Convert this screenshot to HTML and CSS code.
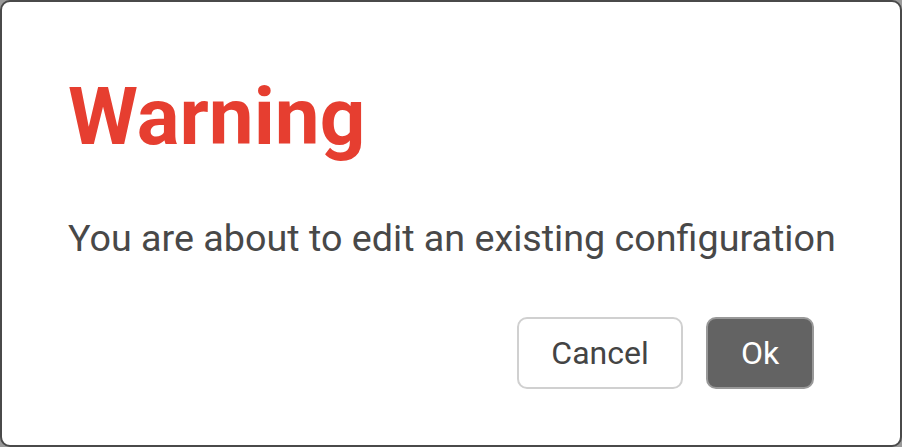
FILE: index.html
```html
<!DOCTYPE html>
<html>
<head>
<meta charset="utf-8">
<link rel="stylesheet" href="styles.css">
</head>
<body>
<div class="dialog">
  <h1 class="title">Warning</h1>
  <p class="message">You are about to edit an existing configuration</p>
  <div class="actions">
    <button class="btn btn-cancel">Cancel</button>
    <button class="btn btn-ok">Ok</button>
  </div>
</div>
</body>
</html>
```
FILE: styles.css
```css
html, body {
  margin: 0;
  padding: 0;
  width: 902px;
  height: 447px;
  background: #9a9a9a;
  overflow: hidden;
}
.dialog {
  box-sizing: border-box;
  width: 902px;
  height: 447px;
  background: #fff;
  border: 2px solid #4a4a4a;
  border-radius: 10px;
  padding: 75px 20px 0 66px;
  display: flex;
  flex-direction: column;
  font-family: Roboto, "Liberation Sans", sans-serif;
}
.title {
  margin: 0;
  font-size: 80px;
  line-height: 1;
  font-weight: 700;
  color: #e63e30;
}
.message {
  margin: 63px 0 0 0;
  font-size: 37.7px;
  line-height: 1;
  color: #484848;
  white-space: nowrap;
}
.actions {
  margin: 59px 66px 0 0;
  display: flex;
  justify-content: flex-end;
  gap: 23px;
}
.btn {
  box-sizing: border-box;
  height: 72px;
  border-radius: 10px;
  font-family: Roboto, "Liberation Sans", sans-serif;
  font-size: 32px;
  padding: 0;
}
.btn-cancel {
  width: 166px;
  background: #fff;
  border: 2px solid #d0d0d0;
  color: #444;
}
.btn-ok {
  width: 108px;
  background: #636363;
  border: 2px solid #999;
  color: #fff;
}
```
